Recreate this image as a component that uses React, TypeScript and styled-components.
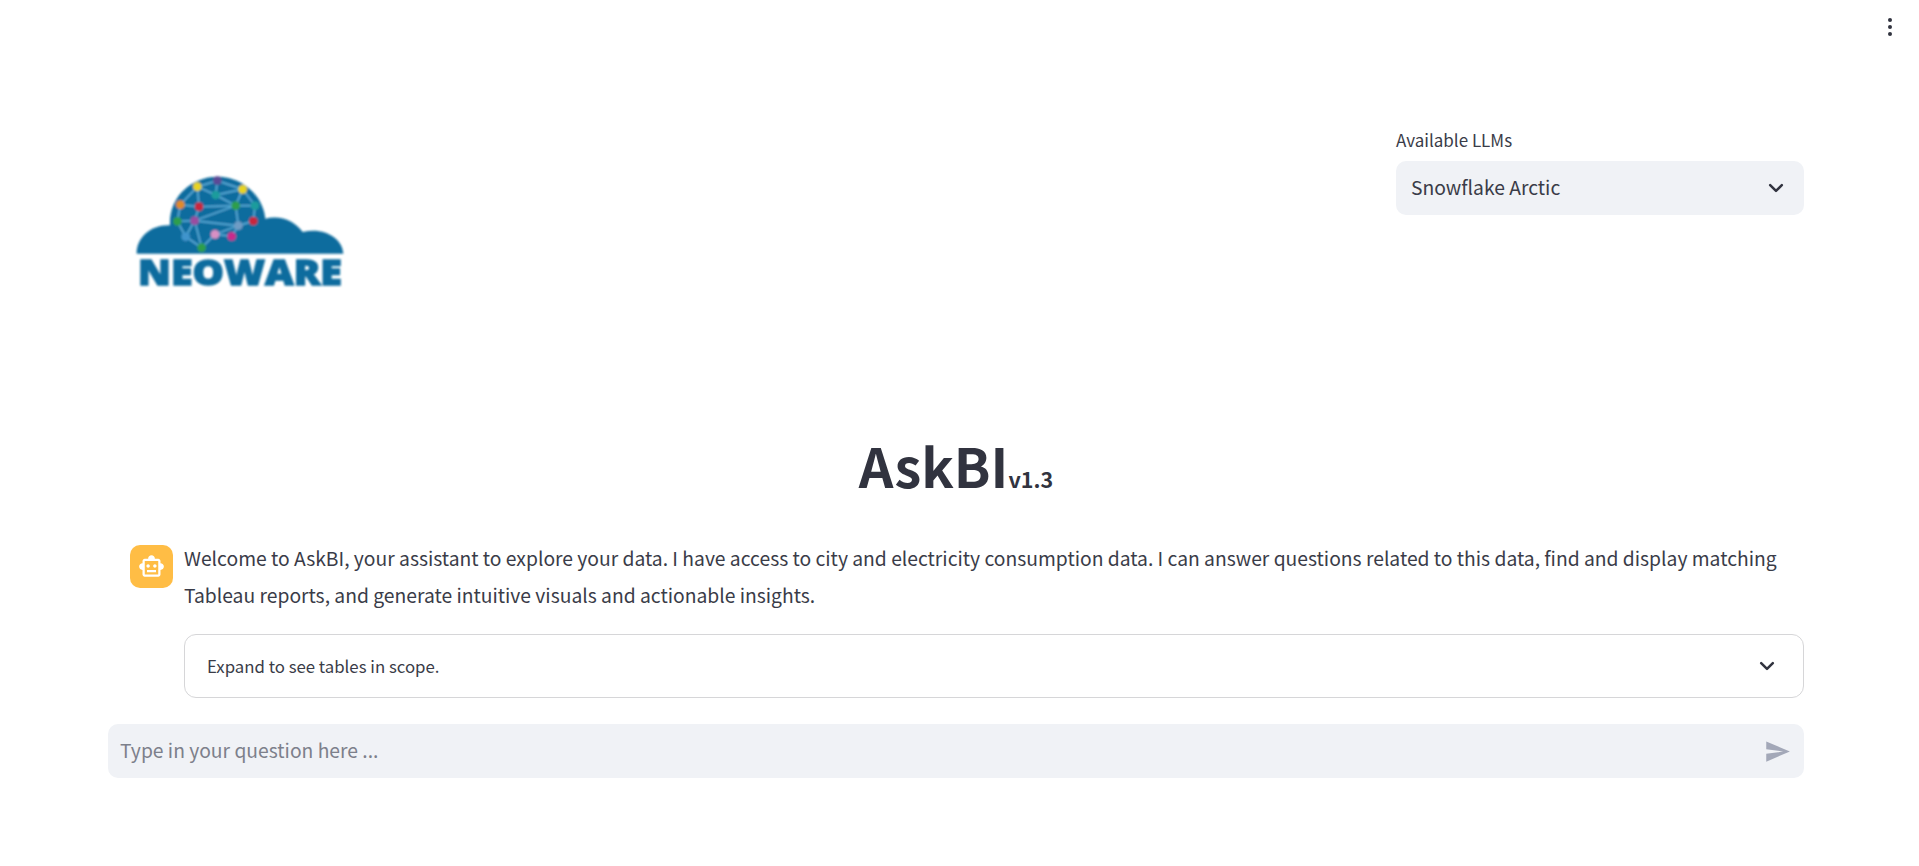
import React from "react";
import styled, { createGlobalStyle } from "styled-components";
import { MdOutlineSmartToy } from "react-icons/md";

const Global = createGlobalStyle`
  html, body { margin: 0; padding: 0; background: #fff; }
  body { font-family: "Noto Sans CJK SC", "Noto Sans", sans-serif; color: #3a3c48; }
`;
const Page = styled.div`
  position: relative;
  height: 866px;
  padding: 128px 115px 0 108px;
  box-sizing: border-box;
  overflow: hidden;
`;
const Menu = styled.div`
  position: absolute;
  top: 18px;
  right: 27px;
  display: flex;
  flex-direction: column;
  gap: 3px;
`;
const Dot = styled.span`
  width: 4px;
  height: 4px;
  border-radius: 50%;
  background: #31333f;
`;
const Header = styled.header`
  display: flex;
  justify-content: space-between;
  align-items: flex-start;
  height: 172px;
`;
const LogoBox = styled.div`
  margin: 32px 0 0 12px;
  width: 240px;
  height: 140px;
`;
const SelectColumn = styled.div`
  width: 408px;
  display: flex;
  flex-direction: column;
`;
const Label = styled.label`
  font-size: 17px;
  line-height: 24px;
  height: 33px;
`;
const Select = styled.div`
  display: flex;
  align-items: center;
  justify-content: space-between;
  height: 54px;
  padding: 0 18px 0 15px;
  background: #f0f2f6;
  border-radius: 10px;
  font-size: 19.3px;
  line-height: 50px;
`;
const SelectValue = styled.span`
  margin-top: -3px;
`;
const Title = styled.h1`
  margin: 132px 0 0;
  text-align: center;
  font-size: 54px;
  font-weight: 700;
  line-height: 66px;
  color: #31333f;
`;
const Version = styled.span`
  font-size: 21.5px;
  font-weight: 700;
`;
const Chat = styled.section`
  display: flex;
  gap: 11px;
  margin-top: 33px;
  padding-left: 22px;
`;
const Avatar = styled.div`
  flex: none;
  width: 43px;
  height: 43px;
  border-radius: 10px;
  background: #ffbd45;
  color: #fff;
  display: flex;
  align-items: center;
  justify-content: center;
`;
const Body = styled.div`
  flex: 1;
  min-width: 0;
`;
const Message = styled.p`
  margin: -5px 0 0;
  font-size: 19.3px;
  line-height: 37px;
`;
const Expander = styled.div`
  display: flex;
  align-items: center;
  justify-content: space-between;
  height: 64px;
  margin-top: 20px;
  padding: 0 26px 0 22px;
  box-sizing: border-box;
  border: 1px solid #d6d6d8;
  border-radius: 12px;
  font-size: 16.8px;
`;
const InputBar = styled.div`
  display: flex;
  align-items: center;
  justify-content: space-between;
  height: 54px;
  margin-top: 26px;
  padding: 0 13px 0 12px;
  background: #f0f2f6;
  border-radius: 10px;
  font-size: 19.3px;
  color: #7d808b;
`;
const Placeholder = styled.span`
  margin-top: -2px;
`;

const Chevron = ({ size }: { size: number }) => (
  <svg width={size} height={size} viewBox="0 0 24 24" fill="none" stroke="#31333f" strokeWidth="3" strokeLinecap="round" strokeLinejoin="round">
    <path d="M5 8.5l7 7 7-7" />
  </svg>
);

const nodes: [number, number, string][] = [
  [232, 80, "#e8d320"], [292, 62, "#5c4a96"], [368, 88, "#e8d320"], [287, 105, "#1c9c9c"],
  [181, 134, "#e08a2c"], [237, 140, "#c8283c"], [347, 137, "#2e9e4c"], [405, 137, "#1c9c9c"],
  [172, 184, "#2e9e4c"], [224, 182, "#9a4ea0"], [355, 197, "#6f9cc4"], [400, 183, "#c8283c"],
  [197, 230, "#3f94cc"], [285, 223, "#d890c4"], [335, 229, "#c82c8c"], [245, 263, "#2e9e4c"],
];
const edges: [number, number][] = [
  [0, 1], [1, 2], [0, 3], [1, 3], [2, 3], [0, 4], [0, 5], [4, 5], [4, 8], [5, 9], [8, 9], [8, 12],
  [9, 12], [5, 6], [3, 6], [2, 6], [2, 7], [6, 7], [6, 10], [7, 11], [10, 11], [9, 6], [9, 10],
  [10, 14], [13, 14], [13, 10], [13, 15], [12, 15], [9, 15],
];

const Logo = () => (
  <svg width="240" height="140" viewBox="0 0 720 420" role="img" aria-label="Neoware">
    <defs>
      <filter id="soft"><feGaussianBlur stdDeviation="2.4" /></filter>
    </defs>
    <g filter="url(#soft)">
      <path
        fill="#0f6c9e"
        d="M50 281 C50 232 92 194 150 196 C146 110 215 50 292 50 C370 50 430 110 436 176 C482 164 526 184 548 216 C612 200 668 235 670 281 Z"
      />
      {edges.map(([a, b], i) => (
        <line key={i} x1={nodes[a][0]} y1={nodes[a][1]} x2={nodes[b][0]} y2={nodes[b][1]} stroke="#5fb2de" strokeWidth="4.5" />
      ))}
      {nodes.map(([x, y, c], i) => (
        <circle key={i} cx={x} cy={y} r="13" fill={c} />
      ))}
      <text
        x="54"
        y="375"
        fontFamily="'Open Sans', sans-serif"
        fontWeight="800"
        fontSize="104"
        fill="#0f6c9e"
        stroke="#0f6c9e"
        strokeWidth="4"
        textLength="612"
        lengthAdjust="spacingAndGlyphs"
      >
        NEOWARE
      </text>
    </g>
  </svg>
);

export default function App() {
  return (
    <Page>
      <Global />
      <Menu>
        <Dot />
        <Dot />
        <Dot />
      </Menu>
      <Header>
        <LogoBox>
          <Logo />
        </LogoBox>
        <SelectColumn>
          <Label>Available LLMs</Label>
          <Select>
            <SelectValue>Snowflake Arctic</SelectValue>
            <Chevron size={20} />
          </Select>
        </SelectColumn>
      </Header>
      <Title>
        AskBI<Version>v1.3</Version>
      </Title>
      <Chat>
        <Avatar>
          <MdOutlineSmartToy size={27} />
        </Avatar>
        <Body>
          <Message>
            Welcome to AskBI, your assistant to explore your data. I have access to city and electricity consumption data. I can answer questions related to this data, find and display matching Tableau reports, and generate intuitive visuals and actionable insights.
          </Message>
          <Expander>
            <span>Expand to see tables in scope.</span>
            <Chevron size={20} />
          </Expander>
        </Body>
      </Chat>
      <InputBar>
        <Placeholder>Type in your question here ...</Placeholder>
        <svg width="27" height="27" viewBox="0 0 24 24" fill="#a3a8b8">
          <path d="M2.01 21L23 12 2.01 3 2 10l15 2-15 2z" />
        </svg>
      </InputBar>
    </Page>
  );
}
